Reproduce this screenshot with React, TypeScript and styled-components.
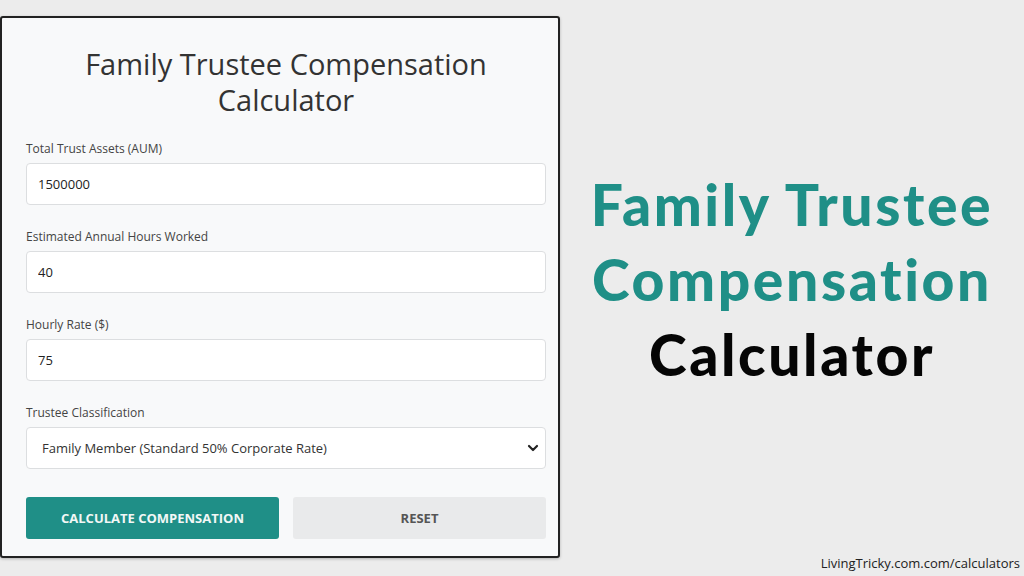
import styled, { createGlobalStyle } from 'styled-components'

const GlobalStyle = createGlobalStyle`
  html, body {
    margin: 0;
    padding: 0;
    background: #ececec;
  }
  * {
    box-sizing: border-box;
  }
`

const fields = [
  { label: 'Total Trust Assets (AUM)', value: '1500000' },
  { label: 'Estimated Annual Hours Worked', value: '40' },
  { label: 'Hourly Rate ($)', value: '75' },
]

function App() {
  return (
    <>
      <GlobalStyle />
      <Page>
        <Card>
          <Title>Family Trustee Compensation Calculator</Title>
          {fields.map((f) => (
            <Field key={f.label}>
              <Label>{f.label}</Label>
              <Input type="text" defaultValue={f.value} />
            </Field>
          ))}
          <Field>
            <Label>Trustee Classification</Label>
            <SelectBox>
              <span>Family Member (Standard 50% Corporate Rate)</span>
              <svg width="12" height="12" viewBox="0 0 12 12">
                <path d="M2 4 L6 8 L10 4" fill="none" stroke="#222" strokeWidth="2.2" strokeLinecap="round" strokeLinejoin="round" />
              </svg>
            </SelectBox>
          </Field>
          <Buttons>
            <Button $primary>Calculate Compensation</Button>
            <Button>Reset</Button>
          </Buttons>
        </Card>
        <Side>
          <Heading>
            <HeadLine $color="#1f8f87">Family Trustee</HeadLine>
            <HeadLine $color="#1f8f87">Compensation</HeadLine>
            <HeadLine $color="#050505">Calculator</HeadLine>
          </Heading>
          <Footer>LivingTricky.com.com/calculators</Footer>
        </Side>
      </Page>
    </>
  )
}

const Page = styled.div`
  width: 1024px;
  height: 576px;
  display: flex;
  overflow: hidden;
  font-family: 'Open Sans', 'Noto Sans', sans-serif;
`

const Card = styled.div`
  width: 560px;
  height: 542px;
  margin: 16px 0 0 0;
  padding: 28px 12px 0 24px;
  background: #f8f9fa;
  border: 2px solid #222;
  border-radius: 3px;
  box-shadow: 0 1px 3px rgba(0, 0, 0, 0.25);
  display: flex;
  flex-direction: column;
`

const Title = styled.h1`
  margin: 0 auto 23px;
  width: 440px;
  text-align: center;
  font-size: 29px;
  line-height: 36px;
  font-weight: 500;
  color: #333;
`

const Field = styled.div`
  display: flex;
  flex-direction: column;
  margin-bottom: 24px;
`

const Label = styled.label`
  font-size: 12px;
  line-height: 16px;
  color: #444;
  margin-bottom: 6px;
`

const Input = styled.input`
  height: 42px;
  padding: 0 11px;
  border: 1px solid #dcdee0;
  border-radius: 4px;
  background: #fff;
  font-family: inherit;
  font-size: 13px;
  color: #222;
  outline: none;
`

const SelectBox = styled.div`
  height: 42px;
  padding: 0 6px 0 15px;
  border: 1px solid #dcdee0;
  border-radius: 4px;
  background: #fff;
  display: flex;
  align-items: center;
  justify-content: space-between;
  font-size: 13px;
  color: #333;
`

const Buttons = styled.div`
  display: flex;
  gap: 14px;
  margin-top: 4px;
`

const Button = styled.button<{ $primary?: boolean }>`
  flex: 1;
  height: 42px;
  border: none;
  border-radius: 3px;
  background: ${(p) => (p.$primary ? '#1f8f87' : '#e9eaeb')};
  color: ${(p) => (p.$primary ? '#f2f7f6' : '#555')};
  font-family: inherit;
  font-size: 13px;
  font-weight: 700;
  text-transform: uppercase;
  cursor: pointer;
`

const Side = styled.div`
  flex: 1;
  display: flex;
  flex-direction: column;
  align-items: center;
`

const Heading = styled.div`
  margin-top: 167px;
  display: flex;
  flex-direction: column;
  align-items: center;
`

const HeadLine = styled.div<{ $color: string }>`
  font-family: Lato, 'Noto Sans', sans-serif;
  font-weight: 900;
  font-size: 57px;
  line-height: 75px;
  letter-spacing: 2.6px;
  font-variant-ligatures: none;
  color: ${(p) => p.$color};
  white-space: nowrap;
`

const Footer = styled.div`
  margin-top: auto;
  align-self: flex-end;
  margin-right: 4px;
  margin-bottom: 4px;
  font-size: 13px;
  color: #222;
`

export default App
